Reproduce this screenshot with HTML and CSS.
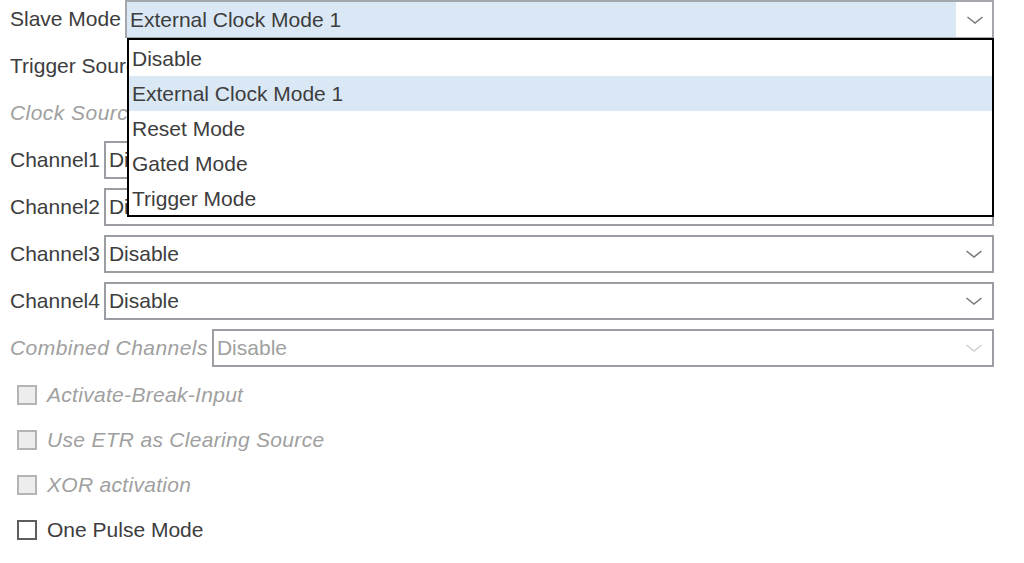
FILE: index.html
```html
<!DOCTYPE html>
<html>
<head>
<meta charset="utf-8">
<link rel="stylesheet" href="styles.css">
</head>
<body>
<div class="form">
  <div class="row">
    <span class="label">Slave Mode</span>
    <div class="select focused">
      <span class="value">External Clock Mode 1</span>
      <span class="chev"><svg width="16" height="8" viewBox="0 0 16 8"><polyline points="0.5,1 8,7 15.5,1" fill="none" stroke="currentColor" stroke-width="1.6"/></svg></span>
    </div>
  </div>
  <div class="row">
    <span class="label">Trigger Source</span>
    <div class="select"><span class="value">Disable</span></div>
  </div>
  <div class="row">
    <span class="label disabled">Clock Source</span>
    <div class="select"><span class="value">Disable</span></div>
  </div>
  <div class="row">
    <span class="label">Channel1</span>
    <div class="select"><span class="value">Disable</span></div>
  </div>
  <div class="row">
    <span class="label">Channel2</span>
    <div class="select"><span class="value">Disable</span></div>
  </div>
  <div class="row">
    <span class="label">Channel3</span>
    <div class="select">
      <span class="value">Disable</span>
      <span class="chev"><svg width="16" height="8" viewBox="0 0 16 8"><polyline points="0.5,1 8,7 15.5,1" fill="none" stroke="currentColor" stroke-width="1.6"/></svg></span>
    </div>
  </div>
  <div class="row">
    <span class="label">Channel4</span>
    <div class="select">
      <span class="value">Disable</span>
      <span class="chev"><svg width="16" height="8" viewBox="0 0 16 8"><polyline points="0.5,1 8,7 15.5,1" fill="none" stroke="currentColor" stroke-width="1.6"/></svg></span>
    </div>
  </div>
  <div class="row">
    <span class="label disabled">Combined Channels</span>
    <div class="select is-disabled">
      <span class="value">Disable</span>
      <span class="chev"><svg width="16" height="8" viewBox="0 0 16 8"><polyline points="0.5,1 8,7 15.5,1" fill="none" stroke="currentColor" stroke-width="1.6"/></svg></span>
    </div>
  </div>
  <div class="checks">
    <div class="check disabled"><span class="box"></span><span>Activate-Break-Input</span></div>
    <div class="check disabled"><span class="box"></span><span>Use ETR as Clearing Source</span></div>
    <div class="check disabled"><span class="box"></span><span>XOR activation</span></div>
    <div class="check"><span class="box"></span><span>One Pulse Mode</span></div>
  </div>

  <ul class="dropdown">
    <li>Disable</li>
    <li class="hl">External Clock Mode 1</li>
    <li>Reset Mode</li>
    <li>Gated Mode</li>
    <li>Trigger Mode</li>
  </ul>
</div>
</body>
</html>
```

FILE: styles.css
```css
html, body {
  margin: 0;
  padding: 0;
  background: #ffffff;
}
body {
  font-family: "Liberation Sans", Arial, sans-serif;
  font-size: 21px;
  color: #3d3d3d;
  width: 1024px;
  height: 563px;
  overflow: hidden;
}
.form {
  position: relative;
  display: flex;
  flex-direction: column;
  gap: 9px;
  padding: 0 30px 0 10px;
}
.row {
  display: flex;
  align-items: center;
  gap: 4px;
  height: 38px;
}
.label {
  white-space: nowrap;
}
.label.disabled {
  font-style: italic;
  color: #a0a0a0;
  letter-spacing: 0.45px;
}
.select {
  flex: 1;
  height: 38px;
  box-sizing: border-box;
  border: 2px solid #9a9ea2;
  display: flex;
  align-items: center;
  padding: 0 10px 0 3px;
  background: #fff;
}
.select .value {
  flex: 1;
  white-space: nowrap;
}
.select.focused {
  border-color: #a4a8ac;
  padding: 0;
  border-bottom-width: 1px;
}
.select.focused .value {
  background: #dae8f5;
  align-self: stretch;
  display: flex;
  align-items: center;
  padding-left: 3px;
}
.select.focused .chev {
  width: 36px;
  box-sizing: border-box;
  display: flex;
  justify-content: flex-start;
  padding-left: 11px;
}
.chev {
  color: #7a7a7a;
  display: flex;
  align-items: center;
}
.select.is-disabled .value {
  color: #a0a0a0;
}
.select.is-disabled .chev {
  color: #cfcfcf;
}
.checks {
  display: flex;
  flex-direction: column;
  margin-top: -4px;
  padding-left: 7px;
}
.check {
  display: flex;
  align-items: center;
  gap: 10px;
  height: 45px;
}
.check .box {
  width: 20px;
  height: 20px;
  box-sizing: border-box;
  border: 2px solid #5e5e5e;
  background: #fff;
}
.check.disabled {
  font-style: italic;
  color: #a0a0a0;
  letter-spacing: 0.3px;
}
.check.disabled .box {
  border-color: #b4b4b4;
  background: #ededed;
}
.dropdown {
  position: absolute;
  left: 127px;
  top: 38px;
  width: 867px;
  height: 179px;
  box-sizing: border-box;
  margin: 0;
  padding: 1px 0 0;
  list-style: none;
  background: #fff;
  border: 2px solid #000;
}
.dropdown li {
  height: 35px;
  line-height: 35px;
  padding-left: 3px;
  white-space: nowrap;
}
.dropdown li.hl {
  background: #dae8f5;
}
```
